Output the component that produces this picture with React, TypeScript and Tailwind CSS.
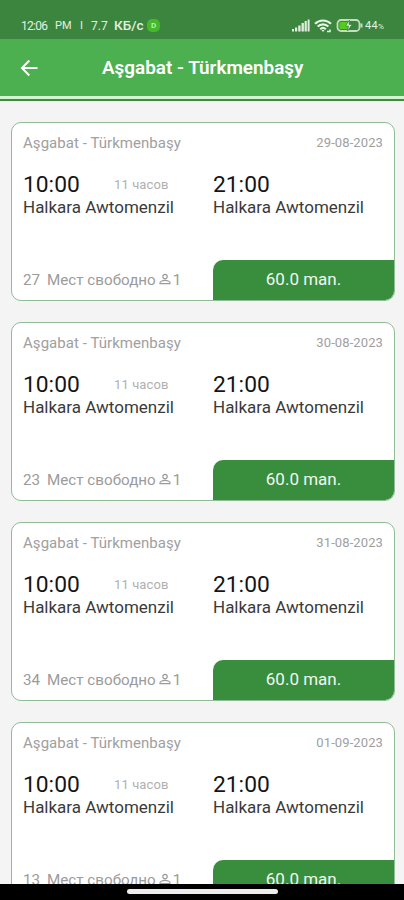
interface Trip {
  date: string;
  seats: number;
}

const ROUTE = 'Aşgabat - Türkmenbaşy';
const STATION = 'Halkara Awtomenzil';

const trips: Trip[] = [
  { date: '29-08-2023', seats: 27 },
  { date: '30-08-2023', seats: 23 },
  { date: '31-08-2023', seats: 34 },
  { date: '01-09-2023', seats: 13 },
];

function StatusBar() {
  return (
    <div className="flex h-[39px] shrink-0 items-center bg-[#3b853e] pt-3 pl-[21px] text-[12px] leading-none text-[#e3f0e0]">
      <span className="w-[34px] whitespace-nowrap tracking-[-0.7px]">12:06</span>
      <span className="w-[25px] whitespace-nowrap text-[11px]">PM</span>
      <span className="w-[11px] text-[11px]">I</span>
      <span className="w-[23px] whitespace-nowrap">7.7</span>
      <span className="w-[31px] whitespace-nowrap text-[13.500px] font-medium">КБ/с</span>
      <span className="ml-0.5 flex size-[13px] items-center justify-center rounded-[5px] bg-[#45b82e] text-[8px] font-bold text-[#b8efa4]">D</span>
      <div className="flex-1" />
      <svg width="18" height="13" viewBox="0 0 18 13" fill="#dfebdc">
        <rect x="0" y="10" width="2" height="2.5" />
        <rect x="3" y="8.5" width="2.2" height="4" />
        <rect x="6.2" y="6.5" width="2.4" height="6" />
        <rect x="9.5" y="4" width="2.4" height="8.5" />
        <rect x="12.6" y="2" width="2.2" height="10.5" />
        <rect x="15.6" y="0.5" width="2" height="12" />
      </svg>
      <svg className="ml-1" width="18" height="14" viewBox="0 0 18 14" fill="none" stroke="#e8f3e6" strokeWidth="2.1">
        <path d="M1 4.8C5.5.4 12.5.4 17 4.8" />
        <path d="M3.6 7.6c3-3 7.8-3 10.8 0" />
        <path d="M6.2 10.2c1.7-1.6 3.9-1.6 5.6 0" />
        <path d="M9 13l-1.5-2h3z" fill="#e8f3e6" stroke="none" />
        <path d="M13 12.5h3v-2" strokeWidth="1.5" />
      </svg>
      <svg className="ml-1" width="28" height="13" viewBox="0 0 28 13" fill="none">
        <rect x="1.5" y="1" width="22" height="11" rx="3.5" stroke="#c5dcc1" strokeWidth="1.8" />
        <rect x="3.4" y="3" width="8.5" height="7" rx="1.5" fill="#54cc18" />
        <path d="M13.5 1L9.5 7h3l-1 5 4.500-6.500h-3z" fill="#e5f5df" stroke="#3b853e" strokeWidth=".7" />
        <path d="M25.5 4.5v4" stroke="#c5dcc1" strokeWidth="2" />
      </svg>
      <span className="mr-[17px] ml-px flex w-[22px] items-end whitespace-nowrap text-[11px] tracking-[0.3px]">
        44<span className="text-[8px]">%</span>
      </span>
    </div>
  );
}

function Header() {
  return (
    <header className="shrink-0">
      <div className="flex h-[57px] items-center bg-[#4caf50] pl-5 text-white">
        <svg className="mt-px shrink-0" width="19" height="18" viewBox="0 0 19 18" fill="none" stroke="white" strokeWidth="2">
          <path d="M17.5 9H2.5M9.3 1.5L2 9l7.3 7.500" />
        </svg>
        <h1 className="mt-0.5 ml-[63px] text-[18.9px] font-semibold whitespace-nowrap">{ROUTE}</h1>
      </div>
      <div className="h-[3px] bg-[#d3f3d3]" />
      <div className="h-0.5 bg-[#388e3c]" />
      <div className="h-px bg-white" />
    </header>
  );
}

function PersonIcon() {
  return (
    <svg className="mb-px ml-[3px] shrink-0" width="12" height="12" viewBox="0 0 12 12" fill="none" stroke="#9b9b9b" strokeWidth="1.2">
      <circle cx="6" cy="3.6" r="2.2" />
      <path d="M1 10.6V9.8C1 8.3 4 7.4 6 7.4s5 .9 5 2.4v.8z" />
    </svg>
  );
}

function TripCard({ date, seats }: Trip) {
  return (
    <div className="flex h-[179px] shrink-0 flex-col overflow-hidden rounded-[10px] border border-[#8fbc94] bg-white">
      <div className="flex h-[39px] items-center justify-between px-[11px] text-[#a0a0a0]">
        <span className="mt-0.5 text-[15px] tracking-[0.05px]">{ROUTE}</span>
        <span className="text-[13px] tracking-[0.1px]">{date}</span>
      </div>
      <div className="flex pt-[10px] pl-[11px]">
        <div className="w-[190px]">
          <div className="flex items-center">
            <span className="w-[91px] text-[22.8px] leading-[25px] text-[#151515]">10:00</span>
            <span className="text-[13px] leading-none tracking-[0.1px] text-[#b0b0b0]">11 часов</span>
          </div>
          <div className="text-[17px] leading-[21px] text-[#3a3a3a]">{STATION}</div>
        </div>
        <div>
          <div className="text-[22.8px] leading-[25px] text-[#151515]">21:00</div>
          <div className="text-[17px] leading-[21px] text-[#3a3a3a]">{STATION}</div>
        </div>
      </div>
      <div className="mt-auto flex h-[40px] items-center">
        <div className="flex w-[201px] shrink-0 items-center pl-[11px] text-[15.2px] whitespace-nowrap text-[#9b9b9b]">
          <span className="w-[24px]">{seats}</span>
          <span>Мест свободно</span>
          <PersonIcon />
          <span className="ml-0.5">1</span>
        </div>
        <div className="flex h-full flex-1 items-center justify-center rounded-tl-[10px] bg-[#388e3c] pb-px text-[17px] text-[#f2f8f2]">
          60.0 man.
        </div>
      </div>
    </div>
  );
}

export default function App() {
  return (
    <div className="flex h-[900px] w-[404px] flex-col overflow-hidden bg-[#f4f4f4] font-['Roboto',sans-serif]">
      <StatusBar />
      <Header />
      <main className="flex min-h-0 flex-1 flex-col gap-[21px] overflow-hidden pt-5 pr-[9px] pl-[11px]">
        {trips.map((trip) => (
          <TripCard key={trip.date} {...trip} />
        ))}
      </main>
      <div className="flex h-4 shrink-0 justify-center bg-black pt-[5px]">
        <div className="h-[5px] w-[151px] rounded-full bg-[#ededed]" />
      </div>
    </div>
  );
}
